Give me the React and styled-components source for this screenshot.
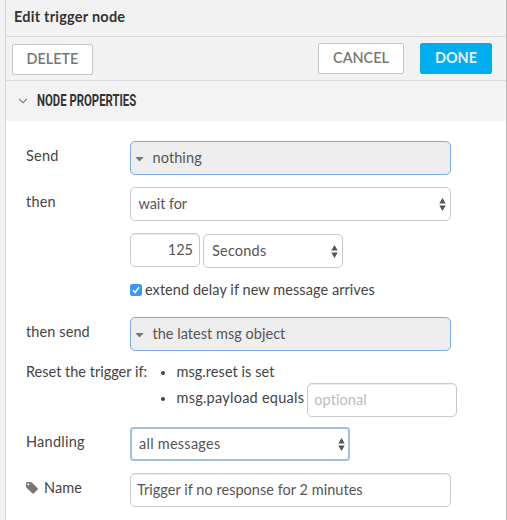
import React from 'react';
import styled, { createGlobalStyle } from 'styled-components';

const GlobalStyle = createGlobalStyle`
  *, *::before, *::after { box-sizing: border-box; }
  body {
    margin: 0;
    background: #f2f2f2;
    color: #444;
    font: 14.5px/20px Lato, sans-serif;
    overflow: hidden;
  }
`;

const Tray = styled.main`
  height: 520px;
  margin-left: 5px;
  border-left: 1px solid #d4d4d4;
  border-right: 1px solid #bbb;
  background: #fff;
`;

const Header = styled.header`
  height: 37px;
  padding: 7px 0 0 8px;
  border-bottom: 1px solid #dbdbdb;
  background: #f2f2f2;
  color: #333;
  font-weight: 700;
  letter-spacing: 0.23px;
`;

const Toolbar = styled.div`
  display: flex;
  align-items: flex-start;
  height: 44px;
  padding: 6px 14px 0 6px;
  border-bottom: 1px solid #dbdbdb;
  background: #f2f2f2;
`;

const Button = styled.button`
  width: ${(p) => p.$width}px;
  height: 31px;
  margin: ${(p) => p.$margin || '0'};
  padding: 0 0 1px;
  border: 1px solid ${(p) => (p.$primary ? '#00adef' : '#c6c6c6')};
  border-radius: 2px;
  background: ${(p) => (p.$primary ? '#00adef' : '#fff')};
  color: ${(p) => (p.$primary ? '#eee' : '#777')};
  font: ${(p) => (p.$primary ? 700 : 600)} 14.4px/20px Lato, sans-serif;
`;

const SectionHeader = styled.div`
  display: flex;
  align-items: center;
  height: 40px;
  padding-left: 12px;
  background: #f3f3f3;
`;

const SectionTitle = styled.h2`
  margin: 0 0 0 9px;
  color: #333;
  font: 700 16.5px/20px Roboto, sans-serif;
  white-space: nowrap;
  transform: scaleX(0.688);
  transform-origin: left;
`;

const Form = styled.form`
  display: flex;
  flex-direction: column;
  padding: 20px 0 0 20px;
`;

const Row = styled.div`
  display: flex;
  height: ${(p) => p.$height || 34}px;
  margin-bottom: ${(p) => (p.$gap === undefined ? 12 : p.$gap)}px;
`;

const Label = styled.label`
  display: flex;
  align-items: center;
  flex: 0 0 104px;
  height: 34px;
  padding-bottom: 5px;
  letter-spacing: ${(p) => p.$spacing || 0.1}px;
  white-space: nowrap;
`;

const Field = styled.div`
  display: flex;
  align-items: center;
  width: ${(p) => p.$width}px;
  height: 34px;
  padding: 0 4px 1px ${(p) => p.$inset || 7}px;
  border: 1px solid #c9c9c9;
  border-radius: 5px;
  background: #fff;
  color: #555;
  letter-spacing: ${(p) => p.$spacing || 0}px;
  white-space: nowrap;
`;

const TypedField = styled(Field)`
  border-color: #7aabea;
  background: #eee;
  padding-left: 4px;
  gap: 8.5px;
`;

const TextField = styled(Field)`
  box-shadow: inset 0 1px 1px rgba(0, 0, 0, 0.075);
`;

const NumberField = styled(TextField)`
  justify-content: flex-end;
  padding-right: 6px;
  margin-right: 3px;
`;

const SelectField = styled(Field)`
  justify-content: space-between;
  margin-top: ${(p) => p.$top || 0}px;
  ${(p) => p.$focused && 'border: 2px solid #a1c0e7; border-radius: 4px; padding: 0 3px 1px 7px;'}
`;

const Placeholder = styled.span`
  color: #bbb;
`;

const Stepper = styled.svg`
  flex: none;
  margin-top: 1px;
`;

const CaretIcon = styled.svg`
  flex: none;
  margin-top: 3px;
`;

const CheckLine = styled.label`
  display: flex;
  align-items: center;
  gap: 3px;
  height: 22px;
  margin-left: 104px;
  letter-spacing: 0.06px;
  white-space: nowrap;
`;

const CheckText = styled.span`
  padding-bottom: 1px;
`;

const ResetGroup = styled.div`
  display: flex;
  height: 65px;
`;

const ResetLabel = styled.div`
  width: 134px;
  white-space: nowrap;
`;

const Conditions = styled.ul`
  margin: 0;
  padding: 0;
  list-style: none;
`;

const Condition = styled.li`
  display: flex;
  height: ${(p) => p.$height}px;
  letter-spacing: ${(p) => p.$spacing || 0}px;
  white-space: nowrap;

  &::before {
    content: '';
    flex: none;
    width: 4px;
    height: 4px;
    margin: 9px 11.5px 0 1px;
    border-radius: 50%;
    background: #444;
  }
`;

const OptionalField = styled(TextField)`
  margin: -5px 0 0 3px;
  padding-left: 6px;
`;

const TagIcon = styled.svg`
  flex: none;
  margin: 0 6px 0 0;
`;

function Caret() {
  return (
    <CaretIcon width="9" height="5" viewBox="0 0 9 5">
      <path d="M.3 0h8.4L4.5 4.6z" fill="#777" />
    </CaretIcon>
  );
}

function Arrows() {
  return (
    <Stepper width="7" height="13" viewBox="0 0 7 13">
      <path d="M.3 5.4 3.5 0l3.2 5.4zM.3 7.6h6.4L3.5 13z" fill="#555" />
    </Stepper>
  );
}

export default function App() {
  return (
    <>
      <GlobalStyle />
      <Tray>
        <Header>Edit trigger node</Header>
        <Toolbar>
          <Button $width={81} $margin="1px auto 0 0">DELETE</Button>
          <Button $width={86} $margin="0 16px 0 0">CANCEL</Button>
          <Button $width={72} $primary>DONE</Button>
        </Toolbar>
        <SectionHeader>
          <svg width="10" height="6" viewBox="0 0 10 6">
            <path d="m1.3 1 3.7 3.8L8.7 1" fill="none" stroke="#777" strokeWidth="1.1" />
          </svg>
          <SectionTitle>NODE PROPERTIES</SectionTitle>
        </SectionHeader>
        <Form>
          <Row>
            <Label $spacing={0.2}>Send</Label>
            <TypedField $width={321} $spacing={0.1}><Caret />nothing</TypedField>
          </Row>
          <Row>
            <Label $spacing={0.2}>then</Label>
            <SelectField $width={321} $inset={7.5} $spacing={-0.1}>wait for<Arrows /></SelectField>
          </Row>
          <Row $height={35} $gap={11}>
            <Label />
            <NumberField $width={70}>125</NumberField>
            <SelectField $width={140} $top={1} $inset={8} $spacing={0.2}>Seconds<Arrows /></SelectField>
          </Row>
          <Row $height={22} $gap={16}>
            <CheckLine>
              <svg width="12" height="12" viewBox="0 0 12 12">
                <rect width="12" height="12" rx="2.5" fill="#3b97f7" />
                <path d="m3 6.3 2.1 2.3L9 3.2" fill="none" stroke="#fff" strokeWidth="1.6" />
              </svg>
              <CheckText>extend delay if new message arrives</CheckText>
            </CheckLine>
          </Row>
          <Row $gap={11}>
            <Label $spacing={0.1}>then send</Label>
            <TypedField $width={321} $spacing={0.03}><Caret />the latest msg object</TypedField>
          </Row>
          <ResetGroup>
            <ResetLabel>Reset the trigger if:</ResetLabel>
            <Conditions>
              <Condition $height={26} $spacing={0.05}>msg.reset is set</Condition>
              <Condition $height={38} $spacing={0.25}>
                msg.payload equals
                <OptionalField $width={150} $spacing={0.1}><Placeholder>optional</Placeholder></OptionalField>
              </Condition>
            </Conditions>
          </ResetGroup>
          <Row>
            <Label $spacing={0.25}>Handling</Label>
            <SelectField $width={220} $spacing={0.25} $focused>all messages<Arrows /></SelectField>
          </Row>
          <Row>
            <Label $spacing={0.1}>
              <TagIcon width="12" height="12" viewBox="0 0 12 12">
                <path d="M0 1.2Q0 0 1.2 0h3.4q.8 0 1.5.7l5.4 5.4q.8.8 0 1.6l-3.6 3.6q-.8.8-1.6 0L.8 6Q0 5.2 0 4.4zM2.3 1.2a1.1 1.1 0 1 0 0 2.2 1.1 1.1 0 0 0 0-2.2z" fill="#777" fillRule="evenodd" />
              </TagIcon>
              Name
            </Label>
            <TextField $width={321} $inset={6} $spacing={0.03}>Trigger if no response for 2 minutes</TextField>
          </Row>
        </Form>
      </Tray>
    </>
  );
}
